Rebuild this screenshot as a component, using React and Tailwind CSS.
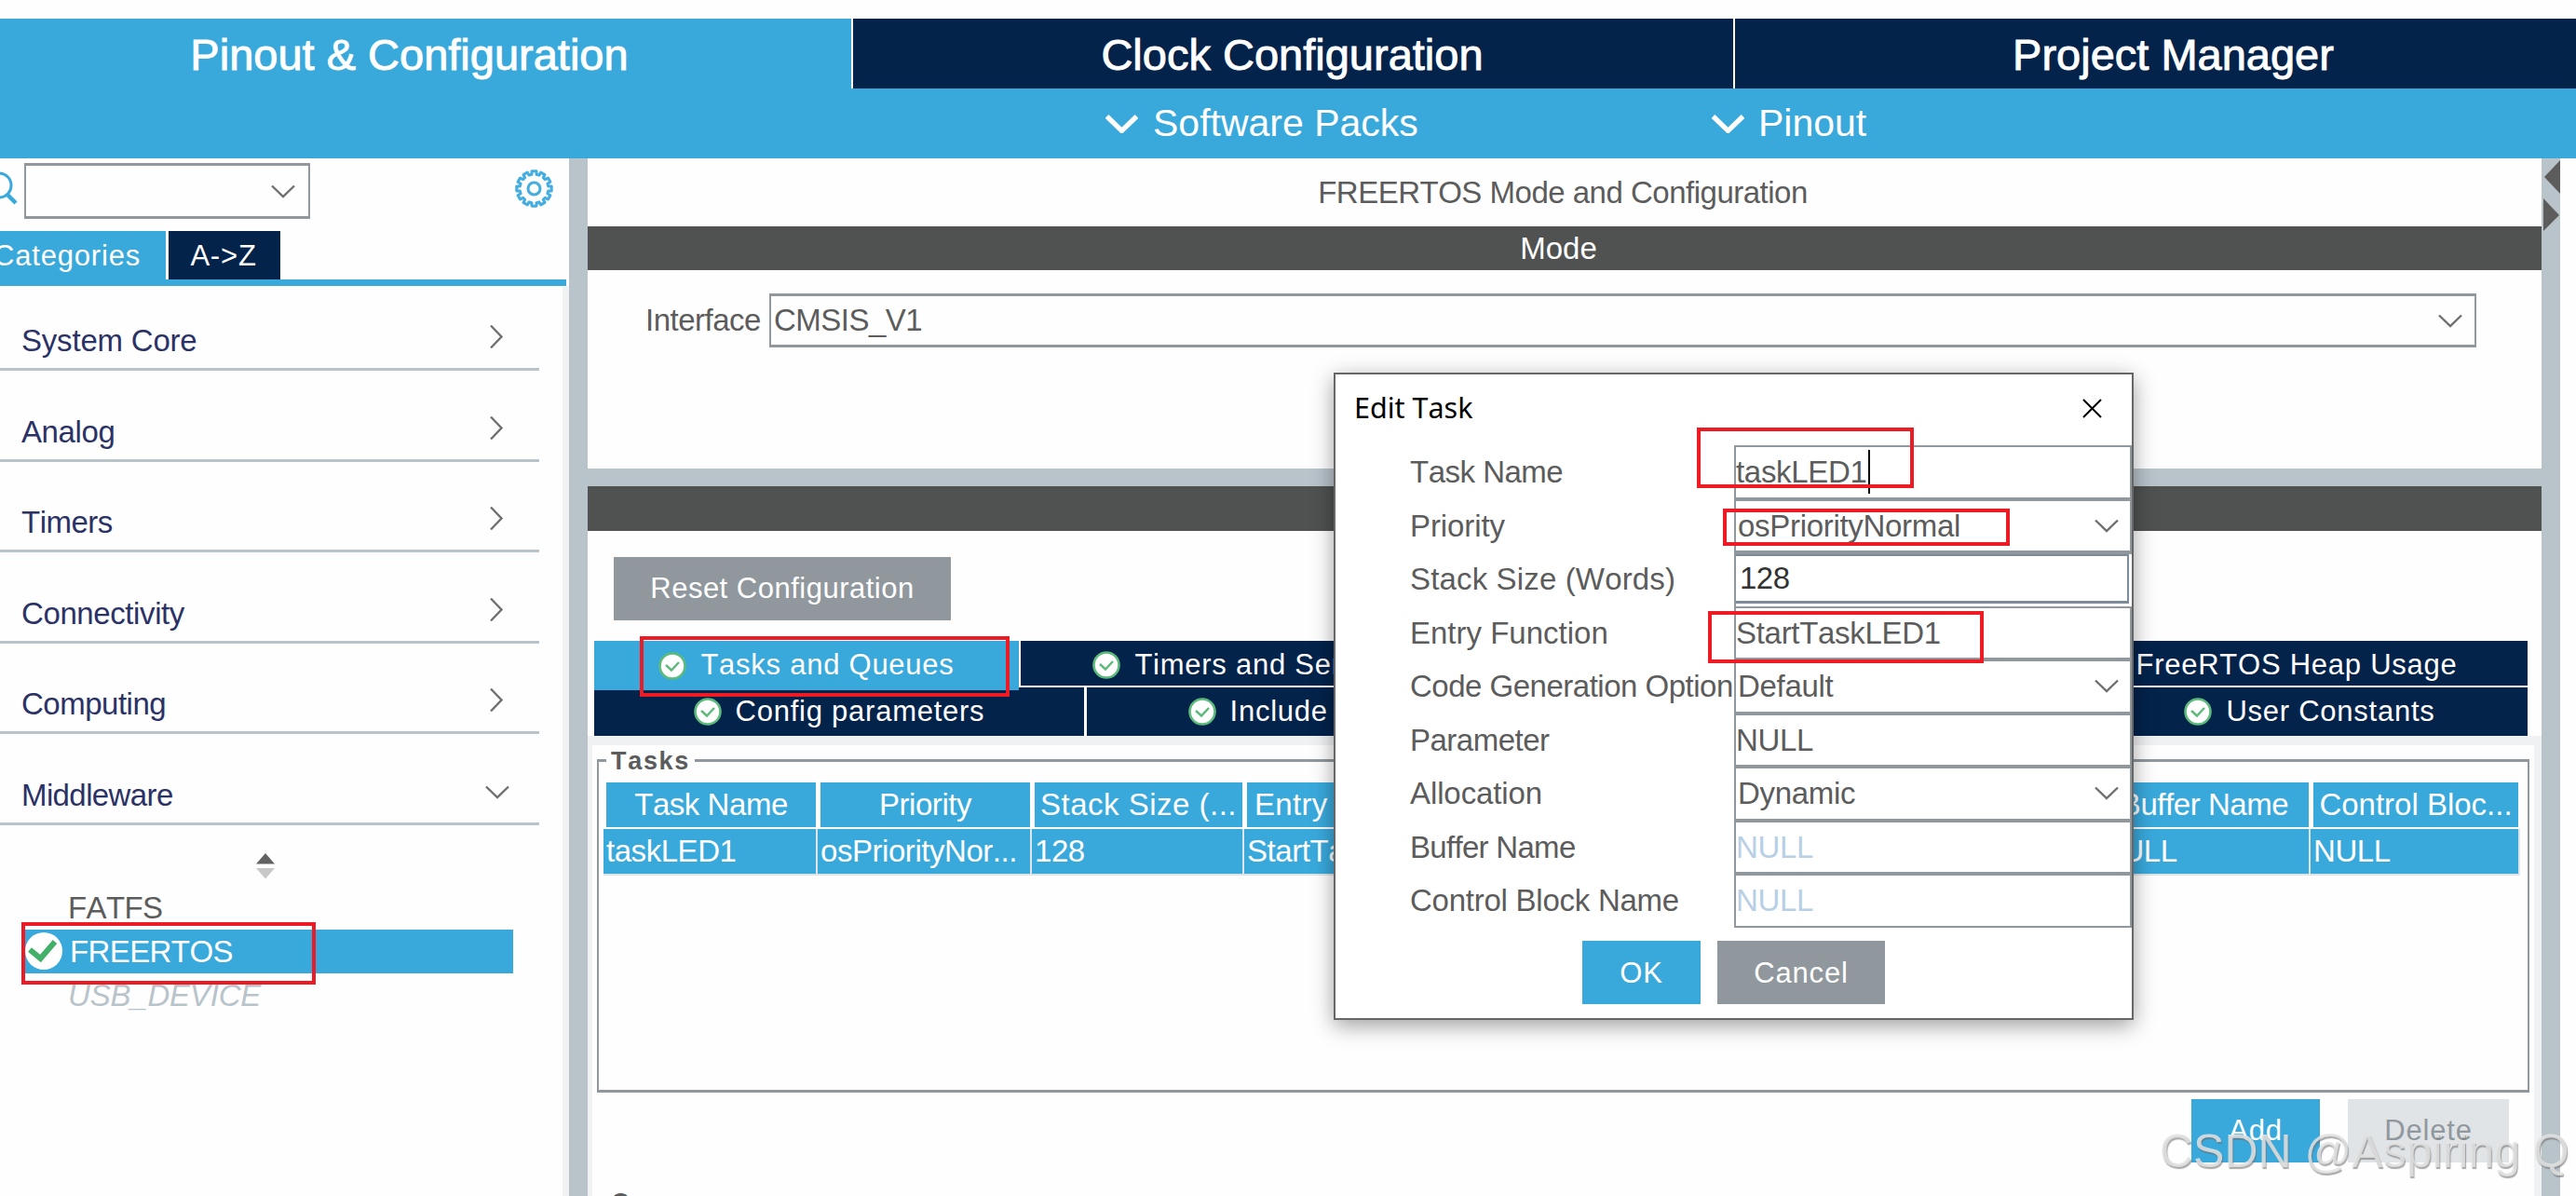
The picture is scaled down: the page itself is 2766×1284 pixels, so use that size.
import React from 'react';

const categories = [
  { name: 'System Core', tracking: 'tracking-[-0.2px]' },
  { name: 'Analog', tracking: 'tracking-[-0.4px]' },
  { name: 'Timers', tracking: 'tracking-[-0.5px]' },
  { name: 'Connectivity', tracking: 'tracking-[-0.4px]' },
  { name: 'Computing', tracking: 'tracking-[-0.5px]' },
  { name: 'Middleware', tracking: 'tracking-[-0.6px]', open: true },
];

const columns = [
  { title: 'Task Name', value: 'taskLED1' },
  { title: 'Priority', value: 'osPriorityNor...' },
  { title: 'Stack Size (...', value: '128', tracking: 'tracking-[0.5px]' },
  { title: 'Entry Functi...', value: 'StartTaskLED1', tracking: 'tracking-[0.3px]' },
  { title: 'Code Gener...', value: 'Default' },
  { title: 'Parameter', value: 'NULL' },
  { title: 'Allocation', value: 'Dynamic' },
  { title: 'Buffer Name', value: 'NULL' },
  { title: 'Control Bloc...', value: 'NULL', tracking: 'tracking-[0px]' },
];

const fields = [
  { label: 'Task Name', value: 'taskLED1', type: 'text', tracking: 'tracking-[-0.5px]', caret: true },
  { label: 'Priority', value: 'osPriorityNormal', type: 'select', tracking: 'tracking-[-0.1px]' },
  { label: 'Stack Size (Words)', value: '128', type: 'number', tracking: 'tracking-[0.15px]' },
  { label: 'Entry Function', value: 'StartTaskLED1', type: 'text', tracking: 'tracking-[0px]' },
  { label: 'Code Generation Option', value: 'Default', type: 'select', tracking: 'tracking-[-0.5px]' },
  { label: 'Parameter', value: 'NULL', type: 'text', tracking: 'tracking-[-0.5px]' },
  { label: 'Allocation', value: 'Dynamic', type: 'select', tracking: 'tracking-[-0.1px]' },
  { label: 'Buffer Name', value: 'NULL', type: 'text', tracking: 'tracking-[-0.7px]', disabled: true },
  { label: 'Control Block Name', value: 'NULL', type: 'text', tracking: 'tracking-[-0.25px]', disabled: true },
];

function Chevron({ className }) {
  return (
    <svg viewBox="0 0 26 15" className={className} fill="none" stroke="currentColor" strokeWidth="2.4">
      <path d="M1 1.5 L13 13 L25 1.5" />
    </svg>
  );
}

function CheckBadge() {
  return (
    <svg viewBox="0 0 30 30" className="size-[30px] shrink-0">
      <circle cx="15" cy="15" r="13.5" fill="#fff" stroke="#5cba7a" strokeWidth="2.6" />
      <path d="M8 14 L14 19.5 L22 11" fill="none" stroke="#5cba7a" strokeWidth="2.4" />
    </svg>
  );
}

// outline with twelve rounded teeth
function gearPath() {
  const points = [];
  for (let i = 0; i < 12; i++) {
    const a = (i * Math.PI) / 6 - Math.PI / 2;
    [[-0.17, 15], [-0.13, 18.4], [0.13, 18.4], [0.17, 15]].forEach(([d, r]) => {
      points.push(`${(20 + r * Math.cos(a + d)).toFixed(2)} ${(20 + r * Math.sin(a + d)).toFixed(2)}`);
    });
  }
  return `M${points.join(' L')} Z`;
}

function Gear() {
  return (
    <svg viewBox="0 0 40 40" className="size-[41px]" fill="none" stroke="#45aede" strokeWidth="3" strokeLinejoin="round">
      <path d={gearPath()} />
      <circle cx="20" cy="20" r="6.3" />
    </svg>
  );
}

function Tab({ label, className }) {
  return (
    <div className={`flex items-center justify-center gap-[15px] whitespace-nowrap text-white text-[31px] tracking-[0.75px] ${className}`}>
      <CheckBadge />
      <span>{label}</span>
    </div>
  );
}

function Header() {
  return (
    <header className="shrink-0 bg-[#39a9dc] text-white">
      <div className="flex -ml-[31px] h-[75px] gap-[2px] text-[47px] leading-[78px] text-center whitespace-nowrap [-webkit-text-stroke:0.9px_#fff]">
        <div className="w-[945px] shrink-0 pr-[4px]">Pinout &amp; Configuration</div>
        <div className="w-[947px] shrink-0 bg-[#03234b] border-l-2 -ml-[2px] border-white pr-[2px]">Clock Configuration</div>
        <div className="w-[945px] shrink-0 bg-[#03234b] border-l-2 -ml-[2px] border-white pr-[2px]">Project Manager</div>
      </div>
      <div className="flex h-[75px] items-center pl-[1187px] pt-[1px] text-[41px]">
        <div className="flex w-[651px] items-center gap-[16px]">
          <Chevron className="w-[35px] h-[20px] [stroke-width:4px]" />
          <span>Software Packs</span>
        </div>
        <div className="flex items-center gap-[15px]">
          <Chevron className="w-[35px] h-[20px] [stroke-width:4px]" />
          <span>Pinout</span>
        </div>
      </div>
    </header>
  );
}

function Sidebar() {
  return (
    <aside className="flex w-[611px] shrink-0 flex-col">
      <div className="flex h-[77.5px] shrink-0 items-start pt-[5px]">
        <div className="w-[26px] pt-[9px]">
          <svg viewBox="0 0 26 38" className="w-[26px] h-[38px]" fill="none" stroke="#39a9dc" strokeWidth="3">
            <circle cx="-1" cy="15" r="13" />
            <path d="M8 25 L17 34" strokeWidth="4.5" />
          </svg>
        </div>
        <div className="flex h-[60px] w-[307px] items-center justify-end border-[3px] border-x-2 border-[#90989e] pr-[14px]">
          <Chevron className="w-[26px] h-[15px] text-[#6f6f6f]" />
        </div>
        <div className="ml-[220px] mt-[7px]">
          <Gear />
        </div>
      </div>
      <div className="flex h-[52.5px] shrink-0 gap-[3px] text-[31px] leading-[53px] tracking-[0.8px] text-white">
        <div className="flex w-[178px] justify-end bg-[#39a9dc] pr-[27px]">Categories</div>
        <div className="w-[120px] bg-[#03234b] pr-[2px] text-center">A-&gt;Z</div>
      </div>
      <div className="h-[7px] w-[608px] shrink-0 bg-[#39a9dc]" />
      <div className="flex-1 border-r-[7px] border-[#f0f1f3]">
        <div className="-mt-[6.5px] w-[579px]">
          {categories.map((category) => (
            <div
              key={category.name}
              className="flex h-[97.5px] items-end justify-between border-b-[3px] border-[#b9c4ca] pb-[11px] pl-[23px] text-[33px] leading-[36px] text-[#2b3266]"
            >
              <span className={category.tracking}>{category.name}</span>
              {category.open ? (
                <Chevron className="mb-[14px] mr-[32px] w-[26px] h-[15px] text-[#6f6f6f]" />
              ) : (
                <Chevron className="mb-[15px] mr-[33px] w-[26px] h-[15px] -rotate-90 text-[#6f6f6f]" />
              )}
            </div>
          ))}
        </div>
        <div className="flex w-[569px] justify-center pt-[30px]">
          <svg viewBox="0 0 20 28" className="w-[20px] h-[28px]">
            <path d="M10 0 L20 11.5 H0 Z" fill="#626262" />
            <path d="M0 16 H20 L10 27.5 Z" fill="#c8c8c8" />
          </svg>
        </div>
        <div className="text-[33px] leading-[47px] tracking-[-0.6px]">
          <div className="pl-[73px] pt-[7px] text-[#5c5c5c]">FATFS</div>
          <div className="relative ml-[26px] flex h-[47px] w-[525px] items-center bg-[#39a9dc] text-white">
            <svg viewBox="0 0 40 40" className="ml-[1px] size-[40px]">
              <circle cx="20" cy="20" r="20" fill="#fff" />
              <path d="M5 18.5 L16.5 28 L32 10" fill="none" stroke="#43b06a" strokeWidth="6" />
            </svg>
            <span className="ml-[8px]">FREERTOS</span>
            <div className="absolute -left-[3px] -top-[8px] h-[67px] w-[316px] border-4 border-[#ed1c24]" />
          </div>
          <div className="pl-[73px] italic tracking-[-0.2px] text-[#b9c4ca]">USB_DEVICE</div>
        </div>
      </div>
    </aside>
  );
}

function TaskTable() {
  return (
    <div className="grid grid-cols-[230px_230px_228px_229px_229px_229px_229px_229px_225px] whitespace-nowrap text-[33px] leading-[48px] tracking-[-0.45px] text-white">
      {columns.map((column) => (
        <div key={column.title} className={`ml-[3px] mr-[2px] h-[48px] bg-[#39a9dc] text-center ${column.tracking || ''}`}>
          {column.title}
        </div>
      ))}
      {columns.map((column) => (
        <div key={column.title} className="mt-[2px] h-[50px] border-b-2 border-r-2 border-[#dfe4e8] bg-[#39a9dc] pl-[3px]">
          {column.value}
        </div>
      ))}
    </div>
  );
}

function ConfigPanel() {
  return (
    <section className="flex flex-1 flex-col">
      <div className="h-[48px] shrink-0 bg-[#4f5251]" />
      <button className="ml-[28px] mt-[28px] h-[68px] w-[362px] shrink-0 bg-[#90989e] text-[31px] tracking-[0.5px] text-white">
        Reset Configuration
      </button>
      <div className="relative ml-[7px] mt-[22px] w-[2076px] shrink-0">
        <div className="flex h-[50px] gap-[2px]">
          <Tab label="Tasks and Queues" className="relative z-10 h-[53px] w-[456px] bg-[#39a9dc]" />
          <Tab label="Timers and Semaphores" className="h-[48px] w-[555px] bg-[#03234b] pt-[4px]" />
          <Tab label="Mutexes" className="h-[48px] w-[257px] bg-[#03234b] pt-[4px]" />
          <Tab label="Events" className="h-[48px] w-[259px] bg-[#03234b] pt-[4px]" />
          <Tab label="FreeRTOS Heap Usage" className="h-[48px] w-[541px] bg-[#03234b] pt-[4px]" />
        </div>
        <div className="flex h-[52px] gap-[3px]">
          <Tab label="Config parameters" className="w-[526px] bg-[#03234b] tracking-[0.5px]" />
          <Tab label="Include parameters" className="w-[541px] bg-[#03234b]" />
          <Tab label="Advanced settings" className="w-[532px] bg-[#03234b]" />
          <Tab label="User Constants" className="w-[468px] bg-[#03234b]" />
        </div>
        <div className="absolute left-[49px] -top-[5px] z-20 h-[65px] w-[397px] border-4 border-[#ed1c24]" />
      </div>
      <div className="flex-1 border-l-[5px] border-r-8 border-t-[10px] border-[#f0f1f3] pl-[5px] pt-[15px]">
        <div className="relative h-[358px] w-[2075px] border-[3px] border-x-2 border-[#90989e] pl-[5px] pt-[22px]">
          <span className="absolute -top-[16px] left-[8px] bg-[#fefefe] px-[5px] text-[27px] font-bold leading-[30px] tracking-[1.7px] text-[#5c5c5c]">
            Tasks
          </span>
          <TaskTable />
        </div>
        <div className="flex justify-end gap-[30px] pr-[27px] pt-[7px] text-[31px] leading-[68px] tracking-[0.8px]">
          <button className="h-[68px] w-[138px] bg-[#39a9dc] text-white">Add</button>
          <button className="h-[68px] w-[173px] bg-[#e0e4e7] text-[#90989e]">Delete</button>
        </div>
        <div className="ml-[15px] mt-[28px] text-[27px] font-bold leading-[30px] tracking-[1.7px] text-[#5c5c5c]">Queues</div>
      </div>
    </section>
  );
}

function Field({ field }) {
  const { label, value, type, tracking, disabled, caret } = field;
  return (
    <div className="flex h-[57.5px] items-center">
      <span className={`w-[348px] shrink-0 text-[#5c5c5c] ${tracking}`}>{label}</span>
      {type === 'number' ? (
        <div className="h-full flex-1 border-l-2 border-t-2 border-[#90989e] pb-[3px] pr-[3px]">
          <div className="flex h-full items-center border-b-[3px] border-r-2 border-t-2 border-[#7b8b99] pl-[4px] text-[#333]">{value}</div>
        </div>
      ) : (
        <div className={`flex h-full flex-1 items-center border-2 border-[#90989e] ${type === 'select' ? 'pl-[2px]' : 'pl-0'}`}>
          <span className={`tracking-[-0.3px] ${disabled ? 'text-[#b8cfe5]' : 'text-[#5c5c5c]'}`}>{value}</span>
          {caret && <span className="ml-[1px] h-[47px] w-[2px] bg-black" />}
          {type === 'select' && <Chevron className="ml-auto mr-[12px] w-[26px] h-[15px] text-[#6f6f6f]" />}
        </div>
      )}
    </div>
  );
}

function EditTaskDialog() {
  return (
    <div className="absolute left-[1432px] top-[400px] h-[695px] w-[859px] border-2 border-[#666] bg-white shadow-[0_6px_22px_rgba(0,0,0,0.38)]">
      <div className="flex h-[76px] items-center justify-between pb-[4px] pl-[20px] pr-[32px]">
        <span className="font-['Noto_Sans'] text-[30.5px] text-black">Edit Task</span>
        <svg viewBox="0 0 21 21" className="size-[21px]" stroke="#000" strokeWidth="2">
          <path d="M1 1 L20 20 M20 1 L1 20" />
        </svg>
      </div>
      <div className="pl-[80px] text-[33px] tracking-[-0.5px] whitespace-nowrap">
        {fields.map((field) => (
          <Field key={field.label} field={field} />
        ))}
      </div>
      <div className="flex gap-[18px] pl-[265px] pt-[14.5px] text-[31px] tracking-[0.8px] text-white">
        <button className="h-[68px] w-[127px] bg-[#39a9dc] pt-[2px]">OK</button>
        <button className="h-[68px] w-[180px] bg-[#90989e] pt-[2px]">Cancel</button>
      </div>
      <div className="absolute left-[388px] top-[57px] h-[65px] w-[233px] border-4 border-[#ed1c24]" />
      <div className="absolute left-[416px] top-[144px] h-[40px] w-[308px] border-4 border-[#ed1c24]" />
      <div className="absolute left-[400px] top-[254px] h-[56px] w-[296px] border-4 border-[#ed1c24]" />
    </div>
  );
}

function App() {
  return (
    <div className="relative flex h-[1284px] w-[2766px] flex-col overflow-hidden bg-[#fefefe] pt-[20px] font-['Liberation_Sans',sans-serif] [font-kerning:none]">
      <Header />
      <div className="flex h-[1114px] shrink-0">
        <Sidebar />
        <main className="flex h-full w-[2138px] shrink-0 flex-col border-x-[20px] border-[#b8c4ca]">
          <div className="flex h-[73px] shrink-0 items-center justify-center pr-[4px] text-[33px] tracking-[-0.5px] text-[#5c5c5c]">
            FREERTOS Mode and Configuration
          </div>
          <div className="flex h-[47px] shrink-0 items-center justify-center bg-[#4f5251] pr-[13px] text-[33px] text-white">
            Mode
          </div>
          <div className="flex h-[213px] shrink-0 items-start pl-[62px] pt-[25px] text-[33px] tracking-[-0.5px] text-[#5c5c5c]">
            <span className="w-[133px] leading-[58px]">Interface</span>
            <div className="flex h-[58px] w-[1833px] items-center justify-between border-[3px] border-x-2 border-[#90989e] pl-[3px] pr-[13px]">
              <span>CMSIS_V1</span>
              <Chevron className="w-[26px] h-[15px] text-[#6f6f6f]" />
            </div>
          </div>
          <div className="h-[19px] shrink-0 bg-[#b8c4ca]" />
          <ConfigPanel />
        </main>
      </div>
      <svg viewBox="0 0 18 78" className="absolute left-[2731px] top-[171px] w-[18px] h-[78px]" fill="#5c5c5c">
        <path d="M18 1 V37 L1 19 Z" />
        <path d="M0 42 V77 L17 60 Z" />
      </svg>
      <EditTaskDialog />
      <div className="absolute left-[2319px] top-[1204px] whitespace-nowrap text-[50px] leading-[64px] text-[#e3e3e3]/85 [text-shadow:1px_2px_1px_rgba(110,110,110,0.6)]">
        CSDN @Aspiring Q
      </div>
    </div>
  );
}

export default App;
